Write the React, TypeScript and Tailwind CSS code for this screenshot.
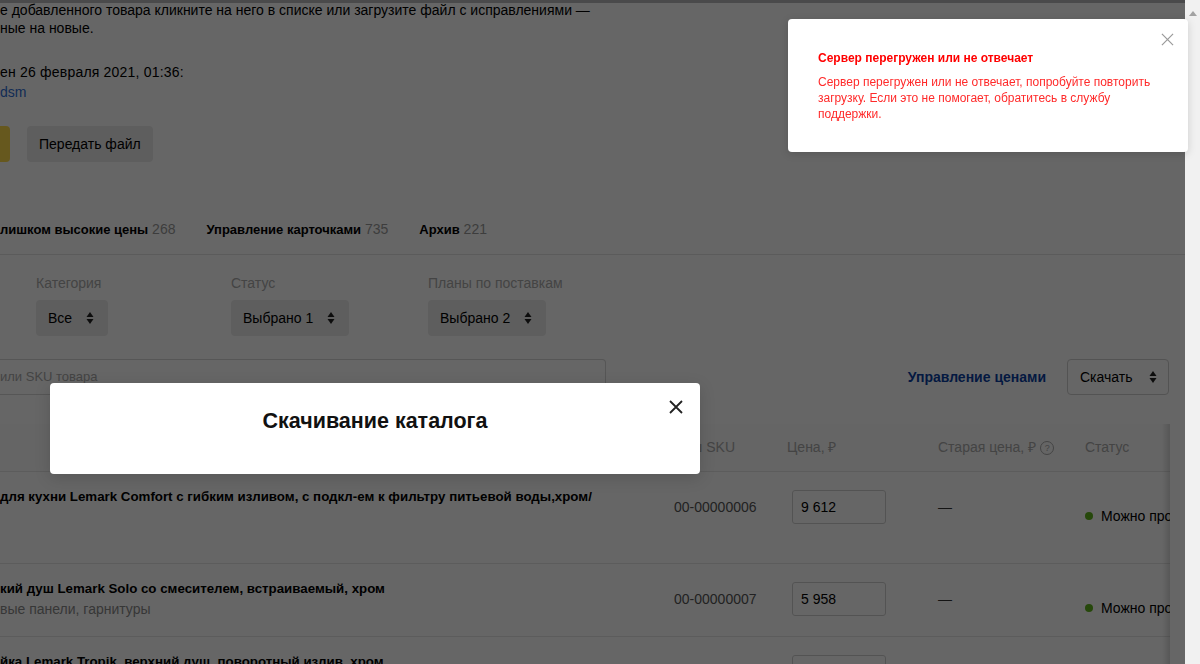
import React from "react";

function UpDown({ className = "" }: { className?: string }) {
  return (
    <svg width="8" height="14" viewBox="0 0 8 14" className={className}>
      <path d="M4 1 L7.5 6 L0.5 6 Z" fill="currentColor" />
      <path d="M4 13 L7.5 8 L0.5 8 Z" fill="currentColor" />
    </svg>
  );
}

function Close({ size, stroke, color }: { size: number; stroke: number; color: string }) {
  return (
    <svg width={size} height={size} viewBox="0 0 14 14">
      <path d="M1 1 L13 13 M13 1 L1 13" stroke={color} strokeWidth={stroke} strokeLinecap="butt" />
    </svg>
  );
}

function Row({
  h,
  title,
  sub,
  sku,
  price,
  status,
}: {
  h: string;
  title: string;
  sub?: string;
  sku: string;
  price: string;
  status: boolean;
}) {
  return (
    <div className={`grid grid-cols-[674px_113px_151px_147px_85px] border-b border-[#e6e6e6] ${h}`}>
      <div className="pt-[15px] whitespace-nowrap overflow-hidden">
        <div className="text-[13.3px] leading-[20px] font-bold text-black">{title}</div>
        {sub && <div className="text-[14px] leading-[20px] text-[#8a8a8a]">{sub}</div>}
      </div>
      <div className="pt-[25px] text-[14px] leading-[20px] text-[#555]">{sku}</div>
      <div className="pt-[18px] pl-[5px]">
        <div className="w-[94px] h-[34px] border border-[#cfcfcf] rounded-[3px] px-[8px] text-[14px] leading-[32px] text-black">
          {price}
        </div>
      </div>
      <div className="pt-[25px] text-[14px] leading-[20px] text-[#333]">—</div>
      <div className="pt-[34px] whitespace-nowrap overflow-hidden">
        {status && (
          <div className="flex items-center gap-[8px] text-[14px] leading-[20px] text-black">
            <span className="shrink-0 w-[8px] h-[8px] rounded-full bg-[#5fb31c]" />
            <span>Можно продавать</span>
          </div>
        )}
      </div>
    </div>
  );
}

export default function App() {
  return (
    <div className="w-[1200px] h-[664px] flex overflow-hidden bg-white font-['Liberation_Sans',Arial,sans-serif]">
      <div className="relative w-[1185px] h-[664px] overflow-hidden bg-white">
        <div className="absolute top-0 left-0 right-0 h-[3px] bg-[#b8b8bc]" />
        <div className="pt-[1px] text-[14px] leading-[18px] text-black whitespace-nowrap">
          <div>е добавленного товара кликните на него в списке или загрузите файл с исправлениями —</div>
          <div>ные на новые.</div>
        </div>
        <div className="mt-[25px] text-[14px] leading-[20px] whitespace-nowrap">
          <div className="text-black tracking-[0.2px]">ен 26 февраля 2021, 01:36:</div>
          <div className="text-[#2f6fd6]">dsm</div>
        </div>
        <div className="mt-[24px] flex h-[36px] gap-[17px]">
          <div className="w-[10px] h-[36px] bg-[#ffdb4d] rounded-r-[4px]" />
          <div className="h-[36px] px-[12px] bg-[#ebebeb] rounded-[4px] flex items-center text-[14px] text-black">
            Передать файл
          </div>
        </div>
        <div className="mt-[57px] flex items-center gap-[31px] h-[36px] pt-[1px] pb-[15px] border-b border-[#e3e3e3] leading-[20px] whitespace-nowrap">
          <div>
            <span className="text-[13px] font-bold text-black">лишком высокие цены</span>
            <span className="text-[14px] text-[#999]"> 268</span>
          </div>
          <div>
            <span className="text-[13px] font-bold text-black">Управление карточками</span>
            <span className="text-[14px] text-[#999]"> 735</span>
          </div>
          <div>
            <span className="text-[13px] font-bold text-black">Архив</span>
            <span className="text-[14px] text-[#999]"> 221</span>
          </div>
        </div>
        <div className="mt-[19px] pl-[36px] grid grid-cols-[195px_197px_200px]">
          {[
            ["Категория", "Все"],
            ["Статус", "Выбрано 1"],
            ["Планы по поставкам", "Выбрано 2"],
          ].map(([label, val]) => (
            <div key={label}>
              <div className="text-[14px] leading-[18px] text-[#aaa] whitespace-nowrap">{label}</div>
              <div className="mt-[8px] inline-flex items-center gap-[14px] h-[36px] pl-[12px] pr-[14px] bg-[#ebebeb] rounded-[4px] text-[14px] text-black">
                {val}
                <UpDown className="text-[#222]" />
              </div>
            </div>
          ))}
        </div>
        <div className="mt-[22px] flex items-center h-[38px] pr-[16px]">
          <div className="w-[606px] h-[36px] border border-l-0 border-[#d6d6d6] rounded-r-[4px] flex items-center text-[13px] text-[#aaa] whitespace-nowrap">
            или SKU товара
          </div>
          <div className="flex-1" />
          <div className="text-[14px] font-bold text-[#0b3fa3]">Управление ценами</div>
          <div className="ml-[21px] w-[102px] h-[36px] border border-[#d0d0d0] rounded-[4px] flex items-center justify-between pl-[12px] pr-[11px] text-[14px] text-black">
            Скачать
            <UpDown className="text-[#222]" />
          </div>
        </div>
        <div className="mt-[28px] relative w-[1170px]">
          <div className="grid grid-cols-[674px_113px_151px_147px_85px] h-[48px] items-center border-b border-[#e6e6e6] bg-[#fcfcfc] text-[14px] text-[#aaa] whitespace-nowrap">
            <div />
            <div>Ваш SKU</div>
            <div>Цена, ₽</div>
            <div className="flex items-center gap-[4px]">
              Старая цена, ₽
              <span className="w-[14px] h-[14px] rounded-full border border-[#aaa] text-[9px] leading-[12px] flex items-center justify-center">
                ?
              </span>
            </div>
            <div>Статус</div>
          </div>
          <Row
            h="h-[92px]"
            title="для кухни Lemark Comfort с гибким изливом, с подкл-ем к фильтру питьевой воды,хром/"
            sku="00-00000006"
            price="9 612"
            status
          />
          <Row
            h="h-[73px]"
            title="кий душ Lemark Solo со смесителем, встраиваемый, хром"
            sub="вые панели, гарнитуры"
            sku="00-00000007"
            price="5 958"
            status
          />
          <Row
            h="h-[80px]"
            title="йка Lemark Tropik, верхний душ, поворотный излив, хром"
            sku="00-00000008"
            price="7 240"
            status
          />
          <div className="absolute top-0 bottom-0 right-0 w-[8px] bg-gradient-to-r from-transparent to-[rgba(0,0,0,0.14)]" />
        </div>

        <div className="absolute inset-0 bg-black/60" />

        <div className="absolute left-[50px] top-[383px] w-[650px] h-[91px] bg-white rounded-[4px] shadow-[0_4px_16px_rgba(0,0,0,0.15)]">
          <div className="pt-[25px] text-center text-[21.5px] leading-[26px] font-bold text-[#111]">
            Скачивание каталога
          </div>
          <div className="absolute right-[17px] top-[17px]">
            <Close size={14} stroke={1.8} color="#222" />
          </div>
        </div>
      </div>

      <div className="w-[15px] h-[664px] bg-[#f1f1f1] flex flex-col items-center pt-[11px]">
        <svg width="8" height="5" viewBox="0 0 8 5">
          <path d="M4 0 L8 5 L0 5 Z" fill="#a3a3a3" />
        </svg>
      </div>

      <div className="fixed left-[788px] top-[19px] w-[400px] h-[133px] bg-white rounded-[4px] shadow-[0_2px_8px_rgba(0,0,0,0.15)] pl-[30px] pr-[25px] pt-[31px]">
        <div className="text-[12px] leading-[16px] font-bold text-[#ff0000]">Сервер перегружен или не отвечает</div>
        <div className="mt-[8px] text-[12px] leading-[16px] text-[#ff2a2a]">
          Сервер перегружен или не отвечает, попробуйте повторить загрузку. Если это не помогает, обратитесь в службу
          поддержки.
        </div>
        <div className="absolute right-[14px] top-[14px]">
          <Close size={13} stroke={1.3} color="#9a9a9a" />
        </div>
      </div>
    </div>
  );
}
